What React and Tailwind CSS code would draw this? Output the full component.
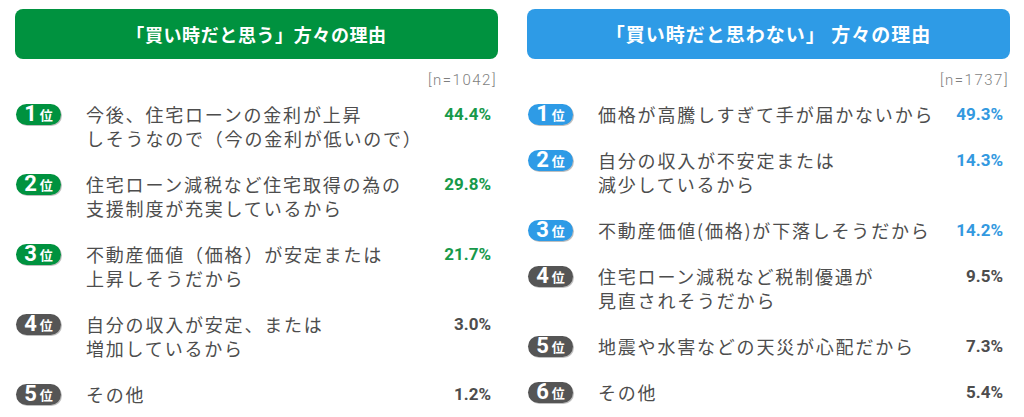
const left = {
  title: "「買い時だと思う」方々の理由",
  n: "[n=1042]",
  head: "bg-[#00923f]",
  titleCls: "text-[18px] tracking-[0.6px]",
  rows: [
    { lines: ["今後、住宅ローンの金利が上昇", "しそうなので（今の金利が低いので）"], pct: "44.4%", hi: true },
    { lines: ["住宅ローン減税など住宅取得の為の", "支援制度が充実しているから"], pct: "29.8%", hi: true },
    { lines: ["不動産価値（価格）が安定または", "上昇しそうだから"], pct: "21.7%", hi: true },
    { lines: ["自分の収入が安定、または", "増加しているから"], pct: "3.0%" },
    { lines: ["その他"], pct: "1.2%" },
  ],
};

const right = {
  title: "「買い時だと思わない」 方々の理由",
  n: "[n=1737]",
  head: "bg-[#2e9be6]",
  titleCls: "text-[19px] tracking-[1px]",
  rows: [
    { lines: ["価格が高騰しすぎて手が届かないから"], pct: "49.3%", hi: true },
    { lines: ["自分の収入が不安定または", "減少しているから"], pct: "14.3%", hi: true },
    { lines: ["不動産価値(価格)が下落しそうだから"], pct: "14.2%", hi: true },
    { lines: ["住宅ローン減税など税制優遇が", "見直されそうだから"], pct: "9.5%" },
    { lines: ["地震や水害などの天災が心配だから"], pct: "7.3%" },
    { lines: ["その他"], pct: "5.4%" },
  ],
};

const jp = "font-['Noto_Sans_CJK_JP',sans-serif]";

function Badge({ rank, color }) {
  return (
    <div
      className={`flex h-[21px] w-[45px] shrink-0 items-center justify-center gap-[3px] rounded-full text-white shadow-[1px_1px_0_rgba(0,0,0,0.25)] ${color}`}
    >
      <span className="font-['Roboto',sans-serif] text-[22px] font-bold leading-none">{rank}</span>
      <span className={`${jp} mt-[1px] text-[13px] font-bold leading-none`}>位</span>
    </div>
  );
}

function Panel({ data, green }) {
  const badgeHi = green ? "bg-[#00923f]" : "bg-[#2e9be6]";
  const pctHi = green ? "text-[#17994a]" : "text-[#3399e0]";
  return (
    <div className="flex w-[483px] flex-col">
      <div className={`flex h-[50px] items-center justify-center rounded-[8px] ${data.head}`}>
        <span className={`${jp} font-bold text-white ${data.titleCls}`}>{data.title}</span>
      </div>
      <div className="mt-[10px] pr-[1px] text-right font-['Roboto',sans-serif] text-[15px] font-light leading-[22px] tracking-[1.5px] text-[#7f7f7f]">
        {data.n}
      </div>
      <div className="mt-[11px] flex flex-col gap-[22px]">
        {data.rows.map((r, i) => (
          <div key={i} className="flex items-start">
            <div className="flex h-[24px] items-center pl-[1px]">
              <Badge rank={i + 1} color={r.hi ? badgeHi : "bg-[#555555]"} />
            </div>
            <div className={`ml-[25px] flex-1 ${jp} text-[18px] leading-[24px] tracking-[1.8px] text-[#4d4d4d]`}>
              {r.lines.map((l, j) => (
                <div key={j} className="whitespace-nowrap">{l}</div>
              ))}
            </div>
            <div
              className={`w-[60px] pr-[7px] text-right font-['Roboto',sans-serif] text-[17px] font-bold leading-[24px] ${
                r.hi ? pctHi : "text-[#4d4d4d]"
              }`}
            >
              {r.pct}
            </div>
          </div>
        ))}
      </div>
    </div>
  );
}

export default function App() {
  return (
    <div className="flex h-[417px] w-[1024px] gap-[29px] overflow-hidden bg-white pl-[15px] pt-[9px]">
      <Panel data={left} green />
      <Panel data={right} />
    </div>
  );
}
